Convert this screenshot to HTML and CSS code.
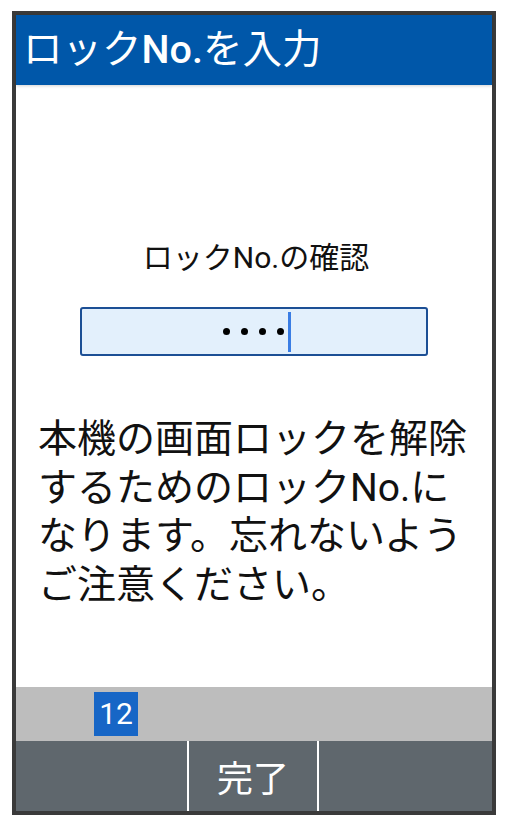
FILE: index.html
```html
<!DOCTYPE html>
<html lang="ja">
<head>
  <meta charset="UTF-8">
  <meta name="viewport" content="width=device-width, initial-scale=1.0">
  <title>ロックNo.を入力</title>
  <link rel="stylesheet" href="styles.css">
</head>
<body>

  <div class="phone">
    <!-- Title bar -->
    <header class="title-bar">ロック<span class="latin">No.</span>を入力</header>

    <!-- Main content -->
    <main class="content">
      <div class="field-label">ロックNo.の確認</div>
      <div class="pin-box">
        <span class="dot"></span>
        <span class="dot"></span>
        <span class="dot"></span>
        <span class="dot"></span>
        <span class="caret"></span>
      </div>
      <p class="message">本機の画面ロックを解除するためのロックNo.になります。忘れないようご注意ください。</p>
    </main>

    <!-- Input mode bar -->
    <div class="mode-bar">
      <span class="mode-badge">12</span>
    </div>

    <!-- Soft keys -->
    <nav class="softkeys">
      <div class="softkey"></div>
      <div class="softkey">完了</div>
      <div class="softkey"></div>
    </nav>
  </div>

</body>
</html>
```

FILE: styles.css
```css
body {
  margin: 0;
  background-color: #fff;
  font-family: Roboto, "Noto Sans CJK JP", sans-serif;
  color: #111;
}

.phone {
  box-sizing: border-box;
  width: 484px;
  height: 804px;
  margin: 11px 0 0 12px;
  border: 4px solid #3a3a3a;
  display: flex;
  flex-direction: column;
  background-color: #fff;
}

.title-bar {
  height: 70px;
  flex: none;
  display: flex;
  align-items: center;
  padding-left: 7px;
  background-color: #0057a9;
  color: #fff;
  font-size: 39.5px;
  line-height: 1;
  box-shadow: 0 1px 3px rgba(0, 0, 0, 0.18);
  position: relative;
}

.title-bar .latin {
  font-weight: 500;
}

.content {
  flex: 1;
  padding: 155px 20px 0 22px;
}

.field-label {
  font-size: 30px;
  line-height: 36px;
  text-align: center;
  padding-left: 2px;
}

.pin-box {
  box-sizing: border-box;
  width: 348px;
  height: 49px;
  margin: 31px 0 0 42px;
  border: 2px solid #1c4f95;
  border-radius: 3px;
  background-color: #e3f0fc;
  display: flex;
  align-items: center;
  justify-content: center;
  gap: 11px;
  padding-left: 6px;
}

.dot {
  width: 7px;
  height: 7px;
  border-radius: 50%;
  background-color: #000;
}

.caret {
  width: 3px;
  height: 40px;
  margin-left: -7px;
  background-color: #3a7de4;
}

.message {
  margin: 59px 0 0;
  font-size: 39px;
  line-height: 48.5px;
  color: #111;
}

.mode-bar {
  height: 54px;
  flex: none;
  background-color: #bdbdbd;
  display: flex;
  align-items: center;
  padding-left: 78px;
}

.mode-badge {
  width: 44px;
  height: 44px;
  display: flex;
  align-items: center;
  justify-content: center;
  background-color: #1766c6;
  color: #fff;
  font-size: 30px;
  line-height: 1;
}

.softkeys {
  height: 70px;
  flex: none;
  display: flex;
  background-color: #5f676d;
}

.softkey {
  display: flex;
  align-items: center;
  justify-content: center;
  color: #fff;
  font-size: 36px;
}

.softkey:nth-child(1) {
  width: 171px;
  border-right: 2px solid #fff;
}

.softkey:nth-child(2) {
  width: 128px;
  border-right: 2px solid #fff;
}

.softkey:nth-child(3) {
  flex: 1;
}
```
